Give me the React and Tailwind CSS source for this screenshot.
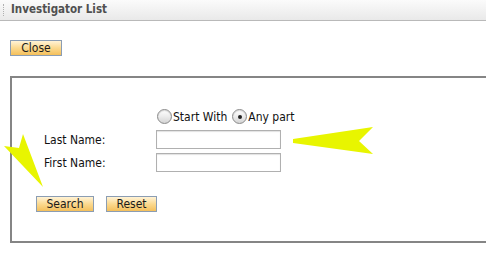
import React from "react";

const font = { fontFamily: '"DejaVu Sans Condensed","DejaVu Sans",Verdana,sans-serif' };

function Btn({ children, w }) {
  return (
    <div
      className={`h-[16px] ${w} flex items-center justify-center border border-[#8b9db3] bg-gradient-to-b from-[#fff3d6] via-[#fbd98f] to-[#f4c05a] text-[12px] leading-none text-[#1a1a1a]`}
    >
      {children}
    </div>
  );
}

function Radio({ checked }) {
  return (
    <span className="relative inline-flex h-[15px] w-[15px] shrink-0 items-center justify-center rounded-full border border-[#8a8a8a] bg-gradient-to-b from-[#ffffff] via-[#ececec] to-[#d4d4d4] shadow-[inset_0_1px_1px_rgba(0,0,0,0.15)]">
      {checked && <span className="h-[4px] w-[4px] rounded-full bg-[#222]" />}
    </span>
  );
}

function Field() {
  return (
    <div className="h-[19px] w-[125px] border border-[#b0b0b0] bg-white shadow-[inset_0_1px_1px_rgba(0,0,0,0.12)]" />
  );
}

export default function App() {
  return (
    <div className="relative h-[258px] w-[486px] overflow-hidden bg-white" style={font}>
      {/* header */}
      <div className="flex h-[21px] items-center border-b border-[#b9b9b9] bg-gradient-to-b from-[#fbfbfb] to-[#e9e9e9]">
        <div className="ml-[3px] h-[12px] w-[1px] border-l border-dotted border-[#b0b0b0]" />
        <span className="ml-[7px] text-[11.5px] font-bold text-[#505050]">Investigator List</span>
      </div>

      <div className="ml-[10px] mt-[19px]">
        <Btn w="w-[52px]">Close</Btn>
      </div>

      {/* form box */}
      <div className="ml-[10px] mt-[20px] h-[167px] w-[500px] border-2 border-[#858585]">
        <div className="pl-[32px] pt-[31px]">
          <div className="grid grid-cols-[112px_125px] text-[12px] text-[#111]">
            <div />
            <div className="flex h-[15px] items-center whitespace-nowrap pl-[1px]">
              <Radio />
              <span className="ml-[1px]">Start With</span>
              <span className="ml-[5px] flex"><Radio checked /></span>
              <span className="ml-[1px]">Any part</span>
            </div>
            <div className="mt-[6px] flex items-center">Last Name:</div>
            <div className="mt-[6px]"><Field /></div>
            <div className="mt-[4px] flex items-center">First Name:</div>
            <div className="mt-[4px]"><Field /></div>
          </div>
        </div>
        <div className="ml-[24px] mt-[24px] flex gap-[12px]">
          <Btn w="w-[58px]">Search</Btn>
          <Btn w="w-[51px]">Reset</Btn>
        </div>
      </div>

      {/* annotation arrows */}
      <svg className="pointer-events-none absolute left-0 top-0" width="486" height="258">
        <polygon points="293,139 373,127 359,141 373,154 293,143" fill="#e8f500" />
        <polygon points="43,187 23,134 19,148 4,146" fill="#e8f500" />
      </svg>
    </div>
  );
}
